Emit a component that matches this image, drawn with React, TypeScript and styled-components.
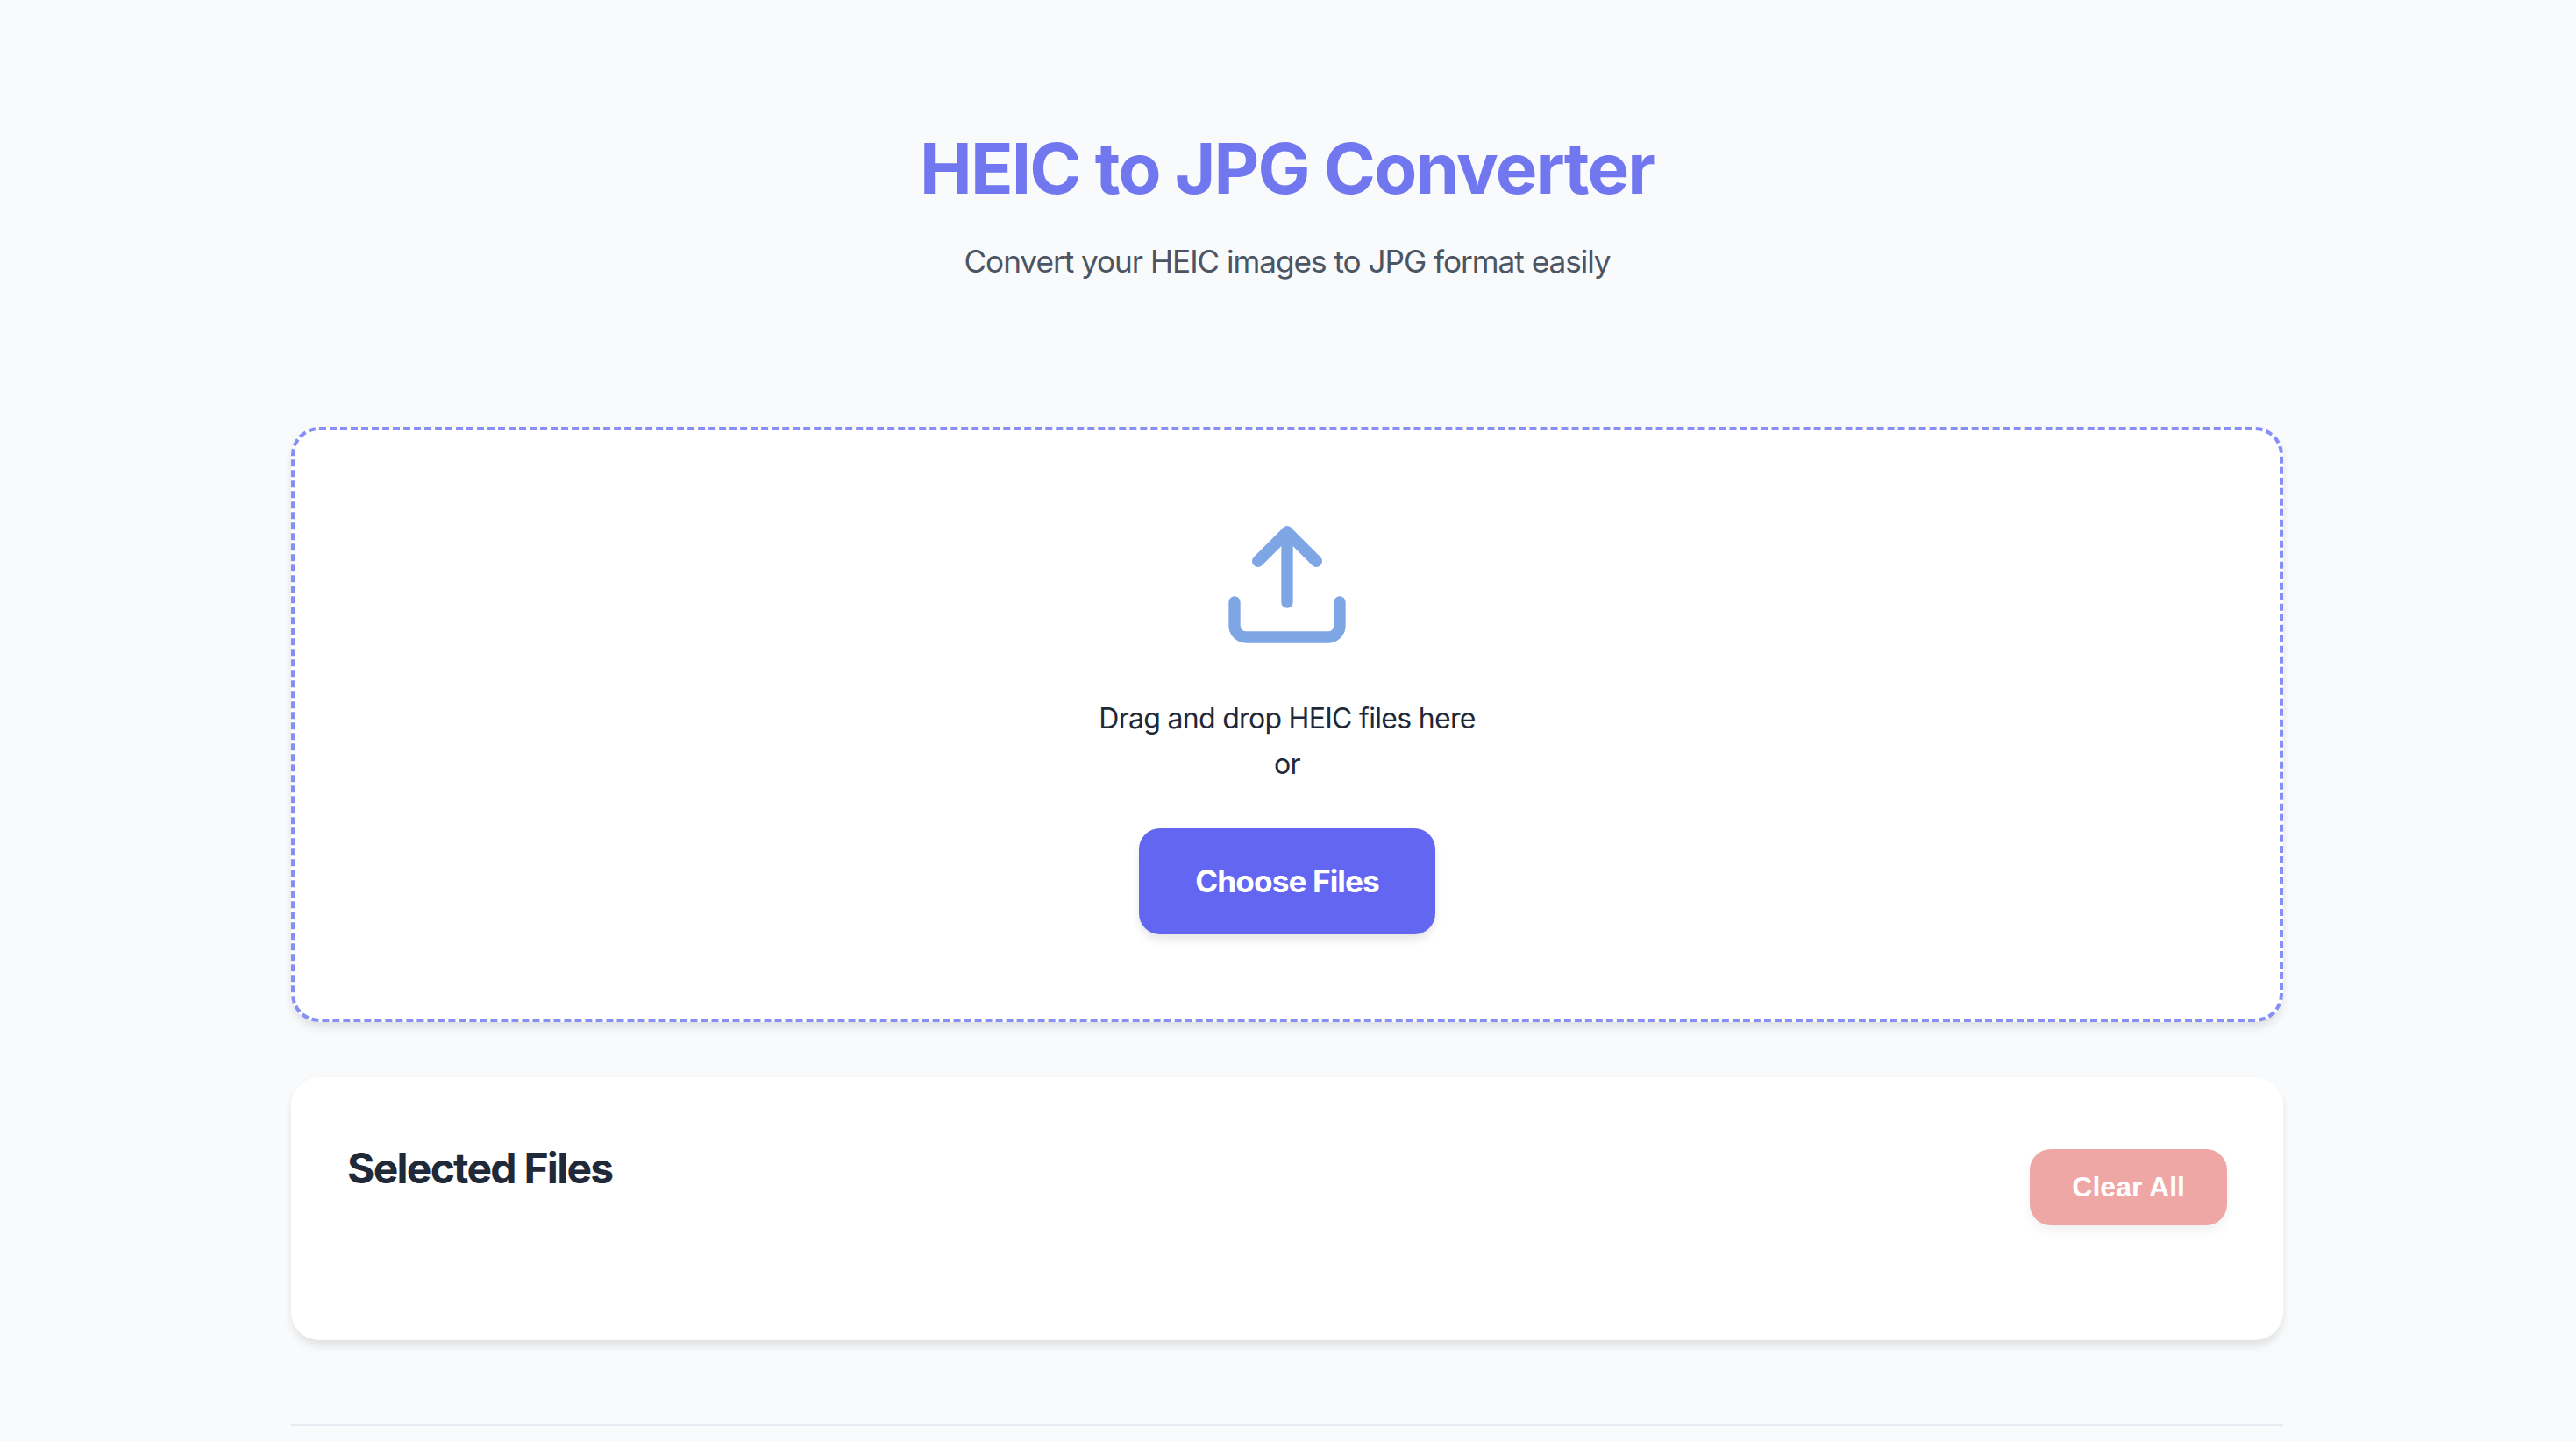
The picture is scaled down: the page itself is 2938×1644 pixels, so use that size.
import React from 'react';
import styled, { createGlobalStyle } from 'styled-components';
import { Upload } from 'lucide-react';

const GlobalStyle = createGlobalStyle`
  * { box-sizing: border-box; margin: 0; padding: 0; }
  html, body { background: #f9fafb; }
  body {
    padding-right: 2px;
    font-family: Inter, "Liberation Sans", sans-serif;
    line-height: 1.6;
    color: #1f2937;
    overflow: hidden;
  }
`;

const softShadow = `0 8px 12px -2px rgba(0, 0, 0, 0.08), 0 4px 12px rgba(0, 0, 0, 0.04)`;

const Page = styled.div`
  max-width: 2400px;
  margin: 0 auto;
  padding: 64px;
  height: 1644px;
`;

const Header = styled.header`
  text-align: center;
  padding: 64px 0 0;
  margin-bottom: 161px;
`;

const Title = styled.h1`
  font-size: 80px;
  font-weight: 750;
  line-height: 1.6;
  letter-spacing: -1.85px;
  color: #7177ee;
  margin-bottom: 14px;
`;

const Subtitle = styled.p`
  font-size: 35.2px;
  letter-spacing: -1.04px;
  color: #4b5563;
`;

const DropZone = styled.section`
  display: flex;
  flex-direction: column;
  align-items: center;
  background: #fff;
  border: 4px dashed #868ff5;
  border-radius: 32px;
  padding: 96px;
  margin-bottom: 63px;
  box-shadow: ${softShadow};
`;

const IconWrap = styled.div`
  display: flex;
  color: #7ea6e4;
  margin-bottom: 47px;
`;

const Prompt = styled.p`
  font-size: 32px;
  letter-spacing: -0.7px;
  color: #1f2937;
  text-align: center;
`;

const PrimaryButton = styled.button`
  margin-top: 48.5px;
  padding: 32px 64px;
  font-family: inherit;
  font-size: 35.2px;
  font-weight: 650;
  line-height: 1.6;
  letter-spacing: -0.9px;
  color: #fff;
  background: #6366f1;
  border: none;
  border-radius: 24px;
  box-shadow: ${softShadow};
`;

const Card = styled.section`
  background: #fff;
  border-radius: 32px;
  padding: 64px;
  margin-bottom: 96px;
  box-shadow: ${softShadow};
`;

const CardHeader = styled.div`
  display: flex;
  align-items: center;
  justify-content: space-between;
  margin-bottom: 48px;
`;

const CardTitle = styled.h2`
  padding-top: 2px;
  font-size: 48px;
  font-weight: 650;
  line-height: 1.6;
  letter-spacing: -1.75px;
  color: #1f2937;
  margin-bottom: 46px;
`;

const DangerButton = styled.button`
  padding: 25px 48px;
  font-family: "Liberation Sans", Arial, sans-serif;
  font-size: 32px;
  font-weight: 700;
  color: #fff;
  background: #e0514d;
  border: none;
  border-radius: 24px;
  opacity: 0.5;
  box-shadow: ${softShadow};
`;

const Footer = styled.footer`
  border-top: 2px solid #e9ebf2;
`;

export default function App() {
  return (
    <>
      <GlobalStyle />
      <Page>
        <Header>
          <Title>HEIC to JPG Converter</Title>
          <Subtitle>Convert your HEIC images to JPG format easily</Subtitle>
        </Header>
        <DropZone>
          <IconWrap>
            <Upload size={160} strokeWidth={2} />
          </IconWrap>
          <Prompt>Drag and drop HEIC files here</Prompt>
          <Prompt>or</Prompt>
          <PrimaryButton>Choose Files</PrimaryButton>
        </DropZone>
        <Card>
          <CardHeader>
            <CardTitle>Selected Files</CardTitle>
            <DangerButton>Clear All</DangerButton>
          </CardHeader>
        </Card>
        <Footer />
      </Page>
    </>
  );
}
